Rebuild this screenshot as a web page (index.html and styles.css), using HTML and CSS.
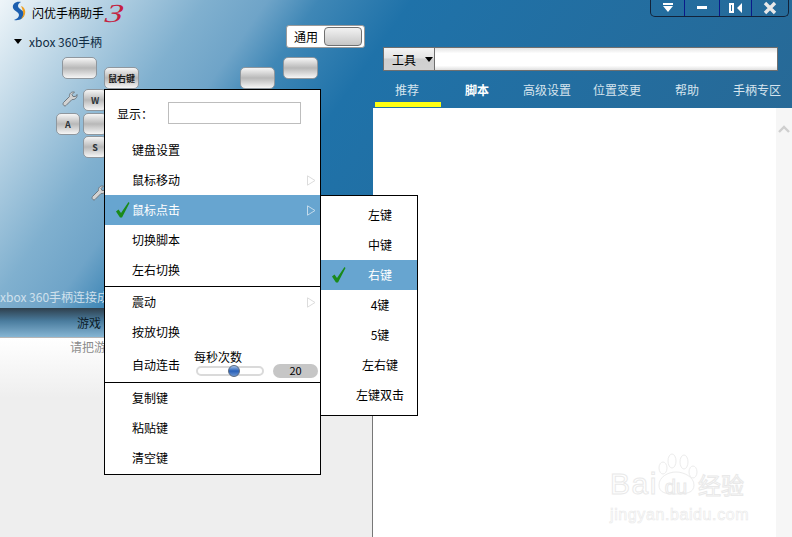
FILE: index.html
```html
<!DOCTYPE html>
<html lang="zh-CN">
<head>
  <meta charset="UTF-8">
  <title>闪优手柄助手3</title>
  <link rel="stylesheet" href="styles.css">
</head>
<body>
  <div class="app">
    <!-- Colonne gauche -->
    <section class="left">
      <div class="left-top">
        <div class="brand">
          <svg class="logo" width="16" height="20" viewBox="0 0 16 20">
            <path d="M11 1C6 0 2 3 3 7c1 3 6 4 6 7 0 2-2 4-5 5 6 1 10-2 10-6 0-4-6-5-6-8 0-2 1-3 3-4z" fill="#1c5fb0"/>
            <path d="M11 5c3 1 5 4 4 8-.5 2-2 4-4 5 1-2 3-4 2-7-.3-2-1-4-2-6z" fill="#f0a020"/>
          </svg>
          <span class="brand-name">闪优手柄助手</span>
          <span class="brand-num">3</span>
        </div>
        <div class="device"><i class="tri"></i>xbox 360手柄</div>
        <div class="mode"><span>通用</span><b></b></div>

        <!-- Boutons du schéma de la manette -->
        <div class="pad">
          <div class="key k-lt"></div>
          <div class="key k-rk">鼠右键</div>
          <div class="key k-rb"></div>
          <div class="key k-rt"></div>
          <div class="key k-w">W</div>
          <div class="key k-a">A</div>
          <div class="key k-c"></div>
          <div class="key k-s">S</div>
          <svg class="wrench w1" width="17" height="17" viewBox="0 0 17 17"><path d="M2.5 11.5 8.5 5.5C8 2.5 10.5.5 13.5 1L11 3.5 12 5.5 14.5 5.5 16 3.5C16.5 7 13.5 9 11 8.5L5 14.5C3.5 16 1 13.5 2.5 11.5z" fill="#d2d2d2" stroke="#6e7880"/></svg>
          <svg class="wrench w2" width="17" height="17" viewBox="0 0 17 17"><path d="M2.5 11.5 8.5 5.5C8 2.5 10.5.5 13.5 1L11 3.5 12 5.5 14.5 5.5 16 3.5C16.5 7 13.5 9 11 8.5L5 14.5C3.5 16 1 13.5 2.5 11.5z" fill="#d2d2d2" stroke="#6e7880"/></svg>
        </div>
        <div class="status">xbox 360手柄连接成功</div>
      </div>
      <div class="game-tab">游戏</div>
      <div class="game-body">请把游戏</div>
    </section>

    <!-- Colonne droite -->
    <section class="right">
      <div class="right-top">
        <div class="win-btns">
          <div class="win-btn b1"><svg width="12" height="10" viewBox="0 0 12 10"><path d="M1 0h10v2H1zM1 3h10L6 9z" fill="#fff"/></svg></div>
          <div class="win-btn b2"><svg width="10" height="4" viewBox="0 0 10 4"><path d="M0 0h10v3H0z" fill="#fff"/></svg></div>
          <div class="win-btn b3"><svg width="14" height="10" viewBox="0 0 14 10"><path d="M0 0h5v10H0zM2 2v6h1V2zM13 0v10L8 5z" fill="#fff" fill-rule="evenodd"/></svg></div>
          <div class="win-btn b4"><svg width="14" height="14" viewBox="0 0 14 14"><path d="M2 2l10 10M12 2 2 12" stroke="#e8e8e8" stroke-width="3.4"/></svg></div>
        </div>
        <div class="search">
          <div class="search-type">工具<i class="tri"></i></div>
          <div class="search-input"></div>
        </div>
        <nav class="tabs">
          <a class="tab is-current">推荐</a>
          <a class="tab is-bold">脚本</a>
          <a class="tab">高级设置</a>
          <a class="tab">位置变更</a>
          <a class="tab">帮助</a>
          <a class="tab">手柄专区</a>
        </nav>
      </div>
      <div class="right-body">
        <div class="scroll">
          <svg width="12" height="8" viewBox="0 0 12 8"><path d="M1 7l5-5 5 5" fill="none" stroke="#cfcfcf" stroke-width="2.4"/></svg>
        </div>
        <div class="watermark">
          <svg class="paw" width="46" height="42" viewBox="0 0 46 42" fill="#fff" stroke="#ececec">
            <ellipse cx="7" cy="15" rx="4" ry="6"/><ellipse cx="16" cy="8" rx="4" ry="7"/><ellipse cx="28" cy="9" rx="4" ry="7"/><ellipse cx="37" cy="19" rx="4" ry="6"/>
            <path d="M3 32c0-8 9-13 17-13s18 5 18 13-8 9-18 9-17-1-17-9z"/>
          </svg>
          <div class="wm-main"><span class="wm-bai">Bai</span><em>du</em><span class="wm-cn">经验</span></div>
          <div class="wm-url">jingyan.baidu.com</div>
        </div>
      </div>
    </section>
  </div>

  <!-- Menu principal -->
  <div class="menu main-menu">
    <div class="menu-show"><span>显示：</span><div class="show-input"></div></div>
    <div class="item">键盘设置</div>
    <div class="item">鼠标移动<svg class="arrow" width="9" height="11" viewBox="0 0 9 11"><path d="M.5.8v9.4L8 5.5z" fill="none" stroke="#dcdcdc"/></svg></div>
    <div class="item is-on"><svg class="check" width="14" height="16" viewBox="0 0 14 16"><path d="M0 9.5 2.5 7.5 5 11 12.5 0 13.5 1 6 15.5H4z" fill="#1a8a1a"/></svg>鼠标点击<svg class="arrow" width="9" height="11" viewBox="0 0 9 11"><path d="M.5.8v9.4L8 5.5z" fill="none" stroke="#c4dbeb"/></svg></div>
    <div class="item">切换脚本</div>
    <div class="item">左右切换</div>
    <hr class="sep">
    <div class="item">震动<svg class="arrow" width="9" height="11" viewBox="0 0 9 11"><path d="M.5.8v9.4L8 5.5z" fill="none" stroke="#dcdcdc"/></svg></div>
    <div class="item">按放切换</div>
    <div class="item item-auto">
      <span>自动连击</span>
      <div class="rate">
        <div class="rate-label">每秒次数</div>
        <div class="rate-row">
          <div class="slider"><i></i></div>
          <div class="rate-val">20</div>
        </div>
      </div>
    </div>
    <hr class="sep">
    <div class="item">复制键</div>
    <div class="item">粘贴键</div>
    <div class="item">清空键</div>
  </div>

  <!-- Sous-menu -->
  <div class="menu sub-menu">
    <div class="item">左键</div>
    <div class="item">中键</div>
    <div class="item is-on"><svg class="check" width="14" height="16" viewBox="0 0 14 16"><path d="M0 9.5 2.5 7.5 5 11 12.5 0 13.5 1 6 15.5H4z" fill="#1a8a1a"/></svg>右键</div>
    <div class="item">4键</div>
    <div class="item">5键</div>
    <div class="item">左右键</div>
    <div class="item">左键双击</div>
  </div>
</body>
</html>
```

FILE: styles.css
```css
* {
  margin: 0;
  padding: 0;
  box-sizing: border-box;
}

body {
  width: 792px;
  height: 537px;
  overflow: hidden;
  position: relative;
  background: #fff;
  color: #000;
  font-family: "Noto Sans CJK SC", "Liberation Sans", sans-serif;
  font-size: 12px;
}

.app {
  display: flex;
  height: 537px;
  background: linear-gradient(125deg, #eef5f9 0, #80b0cf 20%, #6fa4c8 26%, #3f87b6 31%, #1f72a9 40%, #2a6690 100%) 0 0 / 792px 340px no-repeat;
}

.tri {
  display: inline-block;
  width: 0;
  height: 0;
  border-left: 4px solid transparent;
  border-right: 4px solid transparent;
  border-top: 5px solid #000;
}

/* Colonne gauche */
.left {
  width: 373px;
  display: flex;
  flex-direction: column;
  flex: none;
}

.left-top {
  height: 308px;
  position: relative;
}

.brand {
  display: flex;
  align-items: center;
  height: 24px;
  padding: 0 0 0 10px;
}
.logo {
  margin-top: -2px;
}
.brand-name {
  margin-left: 6px;
  font-size: 12px;
}
.brand-num {
  font-family: "Liberation Serif", serif;
  font-style: italic;
  font-size: 26px;
  line-height: 24px;
  margin: 3px 0 0 4px;
  color: #c4213f;
  transform: scaleX(1.35) skewX(-8deg);
}

.device {
  display: flex;
  align-items: center;
  gap: 7px;
  margin: 5px 0 0 14px;
  height: 24px;
  color: #102c44;
}

.mode {
  position: absolute;
  left: 286px;
  top: 25px;
  width: 79px;
  height: 23px;
  display: flex;
  align-items: center;
  justify-content: space-between;
  padding: 0 2px 0 7px;
  background: #fff;
  border: 1px solid #9a9a9a;
  border-radius: 3px;
}
.mode b {
  width: 38px;
  height: 19px;
  border: 1px solid #707070;
  border-radius: 4px;
  background: linear-gradient(#f2f2f2, #c6c6c6);
}

.pad {
  position: absolute;
  inset: 0;
}
.key {
  position: absolute;
  display: flex;
  align-items: center;
  justify-content: center;
  border: 1px solid #8f979e;
  border-radius: 5px;
  background: linear-gradient(#f6f6f6 0, #b8b8b8 50%, #f6f6f6 100%);
  font-size: 9px;
  color: #2c3338;
  font-weight: 700;
}
.k-lt { left: 62px; top: 57px; width: 35px; height: 22px; }
.k-rk { left: 104px; top: 67px; width: 35px; height: 22px; color: #1a1a1a; }
.k-rb { left: 240px; top: 67px; width: 35px; height: 22px; }
.k-rt { left: 283px; top: 57px; width: 35px; height: 22px; }
.k-w { left: 83px; top: 89px; width: 24px; height: 22px; }
.k-a { left: 56px; top: 113px; width: 24px; height: 22px; }
.k-c { left: 83px; top: 113px; width: 24px; height: 22px; }
.k-s { left: 83px; top: 136px; width: 24px; height: 22px; }

.wrench {
  position: absolute;
}
.w1 { left: 61px; top: 91px; }
.w2 { left: 90px; top: 185px; }

.status {
  position: absolute;
  left: 0;
  top: 288px;
  white-space: nowrap;
  color: #cfe0ec;
  line-height: 18px;
}

.game-tab {
  height: 30px;
  padding-left: 77px;
  line-height: 30px;
  color: #0c1c28;
  background: linear-gradient(#2e3f4c 0, #4a7c9e 45%, #86b5d3 100%);
  border-bottom: 1px solid #b5b5b5;
}
.game-body {
  flex: 1;
  padding-left: 70px;
  color: #8c8c8c;
  background: linear-gradient(#fff 0, #eee 60px, #eee 100%);
  border-right: 1px solid #777;
}

/* Colonne droite */
.right {
  flex: 1;
  display: flex;
  flex-direction: column;
}

.right-top {
  height: 108px;
  margin-left: -1px;
  position: relative;
}

.win-btns {
  position: absolute;
  right: 3px;
  top: 0;
  display: flex;
  height: 17px;
  border: 1px solid #12233a;
  border-top: none;
  border-radius: 0 0 5px 5px;
}
.win-btn {
  display: flex;
  align-items: center;
  justify-content: center;
  border-left: 1px solid #0a1a8a;
}
.win-btn:first-child {
  border-left: none;
}
.b1 { width: 33px; }
.b2 { width: 35px; }
.b3 { width: 32px; }
.b4 { width: 37px; }

.search {
  position: absolute;
  left: 11px;
  top: 47px;
  width: 395px;
  height: 24px;
  display: flex;
  border: 1px solid #6f6f6f;
  background: #fff;
}
.search-type {
  width: 51px;
  display: flex;
  align-items: center;
  gap: 9px;
  padding-left: 8px;
  border-right: 1px solid #6f6f6f;
  background: linear-gradient(#f4f4f4 0, #e4e4e4 45%, #cfcfcf 50%, #d2d2d2 100%);
}
.search-input {
  flex: 1;
  background: linear-gradient(#e4e4e4 0, #fff 25%, #fff 80%, #e0e0e0 100%);
}

.tabs {
  position: absolute;
  left: 0;
  top: 73px;
  right: 0;
  display: flex;
}
.tab {
  width: 70px;
  height: 34px;
  padding-top: 8px;
  text-align: center;
  color: #d6e4ee;
  position: relative;
}
.tab.is-current::after {
  content: "";
  position: absolute;
  left: 3px;
  right: 1px;
  top: 29px;
  height: 5px;
  background: #ffff12;
}
.tab.is-bold {
  color: #fff;
  font-weight: 700;
}

.right-body {
  flex: 1;
  background: #fff;
  position: relative;
  display: flex;
  justify-content: flex-end;
}
.scroll {
  width: 16px;
  background: #f6f6f6;
  padding-top: 17px;
  display: flex;
  justify-content: center;
  align-items: flex-start;
}

/* Filigrane */
.watermark {
  position: absolute;
  left: 237px;
  top: 345px;
  width: 150px;
  color: #fff;
  -webkit-text-stroke: 1px #e9e9e9;
}
.paw {
  position: absolute;
  left: 46px;
  top: 0;
}
.wm-main {
  position: relative;
  margin-top: 15px;
  display: flex;
  align-items: baseline;
  font-family: "Liberation Sans", sans-serif;
  font-size: 30px;
  line-height: 32px;
}
.wm-bai {
  letter-spacing: 1.5px;
}
.wm-main em {
  font-style: normal;
  font-size: 20px;
  margin: 0 11px 0 7px;
}
.wm-cn {
  font-family: "Noto Sans CJK SC", sans-serif;
  font-size: 23px;
}
.wm-url {
  font-family: "Liberation Sans", sans-serif;
  font-size: 16px;
  letter-spacing: .6px;
  line-height: 20px;
  margin-top: 2px;
  -webkit-text-stroke: .6px #e9e9e9;
}

/* Menus */
.menu {
  position: absolute;
  background: #fff;
  border: 1px solid #000;
}
.main-menu {
  left: 104px;
  top: 89px;
  width: 217px;
  height: 386px;
}
.sub-menu {
  left: 320px;
  top: 195px;
  width: 98px;
  height: 221px;
  padding-top: 4px;
}
.sub-menu .item {
  padding: 0 0 0 22px;
  text-align: center;
}

.menu-show {
  height: 40px;
  display: flex;
  align-items: center;
  justify-content: space-between;
  padding: 6px 19px 0 12px;
  margin-bottom: 5px;
}
.show-input {
  width: 133px;
  height: 22px;
  border: 1px solid #bdbdbd;
}

.item {
  height: 30px;
  line-height: 30px;
  padding-left: 27px;
  position: relative;
}
.arrow {
  position: absolute;
  right: 4px;
  top: 10px;
}
.check {
  position: absolute;
  left: 11px;
  top: 7px;
}
.item.is-on {
  background: #67a5d0;
  color: #fff;
}

.sep {
  border: none;
  border-top: 1px solid #000;
  margin-top: 1px;
}
.item-auto + .sep {
  margin-top: 0;
}

.item-auto {
  display: flex;
  align-items: flex-start;
  height: 35px;
  line-height: 35px;
}
.rate {
  margin: 2px 0 0 14px;
  line-height: 16px;
}
.rate-row {
  display: flex;
  align-items: center;
  gap: 9px;
  margin-top: -1px;
  padding-left: 2px;
}
.slider {
  width: 68px;
  height: 10px;
  border: 2px solid #dadada;
  border-radius: 5px;
  position: relative;
  background: #fff;
}
.slider i {
  position: absolute;
  left: 30px;
  top: -3px;
  width: 12px;
  height: 12px;
  border-radius: 50%;
  border: 1px solid #5a6a80;
  background: linear-gradient(#a8c4e8 0, #2860b8 50%, #6c94d0 100%);
}
.rate-val {
  width: 45px;
  height: 14px;
  border-radius: 7px;
  background: #c6c6c6;
  text-align: center;
  line-height: 13px;
  font-size: 11px;
}
```
